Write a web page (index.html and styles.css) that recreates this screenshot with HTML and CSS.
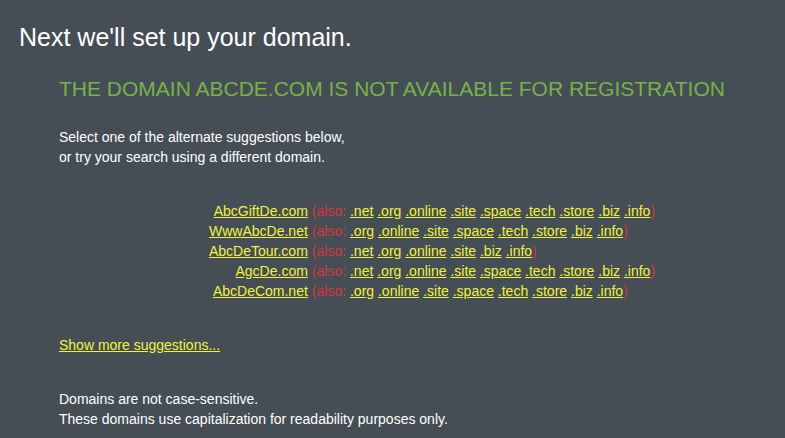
FILE: index.html
```html
<!DOCTYPE html>
<html>
<head>
<meta charset="utf-8">
<link rel="stylesheet" href="styles.css">
</head>
<body>
<div class="page">
  <h1 class="title">Next we'll set up your domain.</h1>
  <div class="content">
    <h2 class="status">THE DOMAIN ABCDE.COM IS NOT AVAILABLE FOR REGISTRATION</h2>
    <p class="intro">Select one of the alternate suggestions below,<br>or try your search using a different domain.</p>
    <table class="suggestions">
      <tr><td class="name"><a href="#">AbcGiftDe.com</a></td><td class="also"><span class="red">(also:</span> <a href="#">.net</a> <a href="#">.org</a> <a href="#">.online</a> <a href="#">.site</a> <a href="#">.space</a> <a href="#">.tech</a> <a href="#">.store</a> <a href="#">.biz</a> <a href="#">.info</a><span class="red">)</span></td></tr>
      <tr><td class="name"><a href="#">WwwAbcDe.net</a></td><td class="also"><span class="red">(also:</span> <a href="#">.org</a> <a href="#">.online</a> <a href="#">.site</a> <a href="#">.space</a> <a href="#">.tech</a> <a href="#">.store</a> <a href="#">.biz</a> <a href="#">.info</a><span class="red">)</span></td></tr>
      <tr><td class="name"><a href="#">AbcDeTour.com</a></td><td class="also"><span class="red">(also:</span> <a href="#">.net</a> <a href="#">.org</a> <a href="#">.online</a> <a href="#">.site</a> <a href="#">.biz</a> <a href="#">.info</a><span class="red">)</span></td></tr>
      <tr><td class="name"><a href="#">AgcDe.com</a></td><td class="also"><span class="red">(also:</span> <a href="#">.net</a> <a href="#">.org</a> <a href="#">.online</a> <a href="#">.site</a> <a href="#">.space</a> <a href="#">.tech</a> <a href="#">.store</a> <a href="#">.biz</a> <a href="#">.info</a><span class="red">)</span></td></tr>
      <tr><td class="name"><a href="#">AbcDeCom.net</a></td><td class="also"><span class="red">(also:</span> <a href="#">.org</a> <a href="#">.online</a> <a href="#">.site</a> <a href="#">.space</a> <a href="#">.tech</a> <a href="#">.store</a> <a href="#">.biz</a> <a href="#">.info</a><span class="red">)</span></td></tr>
    </table>
    <p class="more"><a href="#">Show more suggestions...</a></p>
    <p class="note">Domains are not case-sensitive.<br>These domains use capitalization for readability purposes only.</p>
  </div>
</div>
</body>
</html>
```
FILE: styles.css
```css
html, body {
  margin: 0;
  padding: 0;
  background: #454e55;
}
body {
  font-family: "Liberation Sans", Arial, sans-serif;
  color: #ffffff;
}
.page {
  padding: 22px 0 0 19px;
}
.title {
  margin: 0;
  font-size: 25px;
  font-weight: normal;
  line-height: 30px;
}
.content {
  padding-left: 40px;
}
.status {
  margin: 24px 0 0;
  font-size: 21px;
  font-weight: normal;
  color: #78b14a;
  line-height: 26px;
}
.intro {
  margin: 25px 0 0;
  font-size: 14px;
  line-height: 20px;
}
.suggestions {
  margin: 34px 0 0 150px;
  border-collapse: collapse;
  font-size: 14px;
  line-height: 20px;
}
.suggestions td {
  padding: 0;
}
.suggestions .name {
  text-align: right;
  padding-right: 4px;
}
a {
  color: #f2f23e;
  text-decoration: underline;
}
.red {
  color: #d8363c;
}
.more {
  margin: 34px 0 0;
  font-size: 14px;
  line-height: 20px;
}
.note {
  margin: 34px 0 0;
  font-size: 14px;
  line-height: 20px;
}
```
